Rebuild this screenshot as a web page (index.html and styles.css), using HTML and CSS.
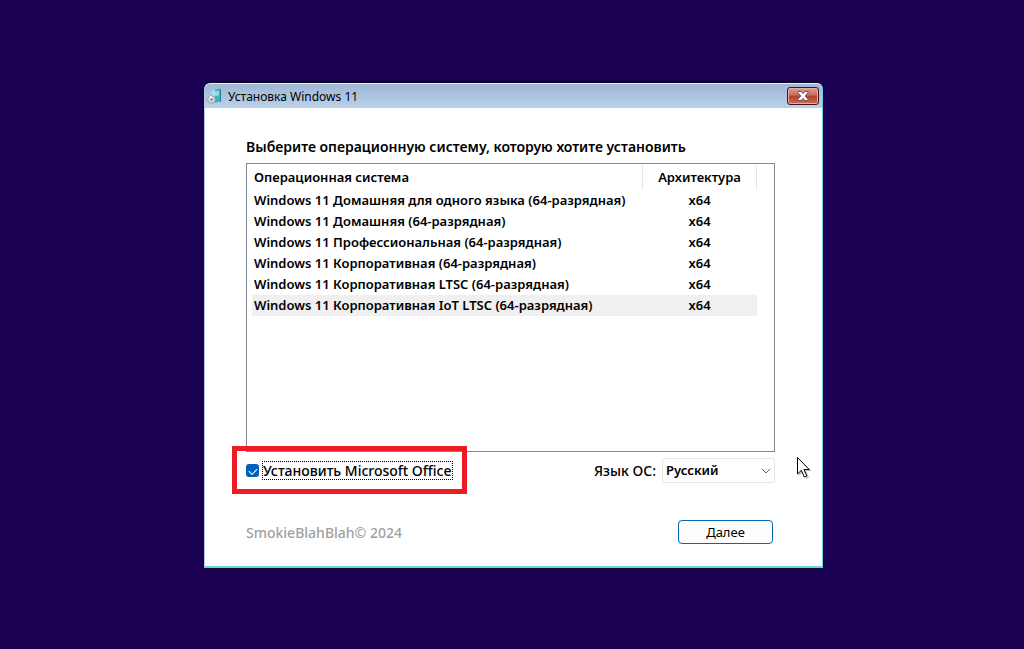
FILE: index.html
```html
<!DOCTYPE html>
<html lang="ru">
<head>
    <meta charset="UTF-8">
    <meta name="viewport" content="width=device-width, initial-scale=1.0">
    <title>Установка Windows 11</title>
    <link rel="stylesheet" href="styles.css">
</head>
<body>
    <main class="window">
        <header class="title-bar">
            <svg class="app-icon" width="16" height="16" viewBox="0 0 16 16">
                <path d="M4 2.500 13 .5v13L5 15.500z" fill="#38b3c4"/>
                <path d="M4 2.500 8 1.600v12.900L5 15.500z" fill="#a5e3ea"/>
                <path d="M8 3.500 12 2.500v5L8 8z" fill="#8be0e6"/>
                <path d="M13 .5 14 1.500v12l-1 .5z" fill="#1d8496"/>
                <circle cx="4.500" cy="11.500" r="3.800" fill="#d5dce0" stroke="#8796a0" stroke-width=".8"/>
                <path d="M4.500 11.500 2 9.500a4 4 0 0 1 2.500-2z" fill="#fff"/>
                <circle cx="4.500" cy="11.500" r="1.200" fill="#71818e"/>
            </svg>
            <h1 class="title">Установка Windows 11</h1>
            <button class="close-btn" type="button" aria-label="Закрыть">
                <svg width="12" height="10" viewBox="0 0 12 10">
                    <path d="M1 .5h3.200L6 2.600 7.800.5H11v1.300L8.200 5 11 8.200v1.300H7.800L6 7.400 4.200 9.500H1V8.200L3.800 5 1 1.800z" fill="#fff" stroke="#54535f" stroke-width=".9"/>
                </svg>
            </button>
        </header>

        <form class="content">
            <h2 class="heading">Выберите операционную систему, которую хотите установить</h2>

            <div class="os-list">
                <table class="os-table">
                    <thead>
                        <tr><th>Операционная система</th><th class="arch">Архитектура</th></tr>
                    </thead>
                    <tbody>
                        <tr><td>Windows 11 Домашняя для одного языка (64-разрядная)</td><td class="arch">x64</td></tr>
                        <tr><td>Windows 11 Домашняя (64-разрядная)</td><td class="arch">x64</td></tr>
                        <tr><td>Windows 11 Профессиональная (64-разрядная)</td><td class="arch">x64</td></tr>
                        <tr><td>Windows 11 Корпоративная (64-разрядная)</td><td class="arch">x64</td></tr>
                        <tr><td>Windows 11 Корпоративная LTSC (64-разрядная)</td><td class="arch">x64</td></tr>
                        <tr class="selected"><td>Windows 11 Корпоративная IoT LTSC (64-разрядная)</td><td class="arch">x64</td></tr>
                    </tbody>
                </table>
            </div>

            <div class="options">
                <div class="office">
                    <input class="checkbox" type="checkbox" id="office" checked>
                    <label class="office-label" for="office">Установить Microsoft Office</label>
                </div>
                <div class="language">
                    <label for="language">Язык ОС:</label>
                    <div class="select-box">
                        <select class="select" id="language">
                            <option>Русский</option>
                        </select>
                        <svg class="chevron" width="10" height="6" viewBox="0 0 10 6">
                            <path d="M.8.8 5 5 9.200.8" fill="none" stroke="#666" stroke-width="1"/>
                        </svg>
                    </div>
                </div>
            </div>

            <footer class="footer">
                <span class="copyright">SmokieBlahBlah© 2024</span>
                <button class="next-btn" type="button">Далее</button>
            </footer>
        </form>

        <svg class="cursor" width="18" height="26" viewBox="0 0 18 26">
            <path d="M3 3v17l4-4 3 7 3-1.500-3-6.500h5.500z" fill="#000" opacity=".25"/>
            <path d="M1.500 1.500v16.500l3.800-3.700 3 6.700 2.500-1.200-2.900-6.300h5.300z" fill="#fff" stroke="#000"/>
        </svg>
    </main>
</body>
</html>
```

FILE: styles.css
```css
* {
    margin: 0;
    padding: 0;
    box-sizing: border-box;
}

body {
    display: flex;
    align-items: center;
    justify-content: center;
    min-height: 100vh;
    padding: 2px 0 0 3px;
    background: #190053;
    color: #000;
    font-family: 'Noto Sans', 'Open Sans', sans-serif;
    font-size: 14px;
    font-weight: 500;
    line-height: 21px;
}

button,
input,
select {
    font: inherit;
    color: inherit;
}

.window {
    position: relative;
    width: 100%;
    max-width: 619px;
    background: #fff;
    border: 1px solid #6fd0e0;
    border-left-color: #b5c8dc;
    border-top-color: #e6eef6;
    border-bottom-width: 2px;
    border-radius: 6px 6px 0 0;
    box-shadow: 0 0 0 1px #0b0a20;
}

.title-bar {
    display: flex;
    align-items: center;
    gap: 5px;
    height: 24px;
    padding: 0 3px 0 2px;
    background: linear-gradient(#9fb7d4, #b9d1ea);
    border-radius: 5px 5px 0 0;
}

.title {
    flex: 1;
    font-size: 12px;
    font-weight: 400;
}

.close-btn {
    display: flex;
    align-items: center;
    justify-content: center;
    width: 32px;
    height: 18px;
    background: linear-gradient(#dc9c8f, #cb6b58 45%, #b5402c 50%, #cf6a54);
    border: 1px solid #47131b;
    border-radius: 3px;
    box-shadow: inset 0 0 0 1px #e5aea3;
}

.content {
    padding: 28px 47px 22px 41px;
}

.heading {
    margin-bottom: 6px;
    font-size: 14px;
    font-weight: 600;
}

.os-list {
    height: 289px;
    padding: 1px 17px 0 5px;
    border: 1px solid #828790;
}

.os-table {
    width: 100%;
    border-collapse: collapse;
    font-size: 13px;
    font-weight: 600;
}

.os-table th {
    height: 25px;
    padding: 0 2px;
    border-right: 1px solid #e5e5e5;
    font-weight: 600;
    text-align: left;
}

.os-table td {
    height: 21px;
    padding: 0 2px;
    white-space: nowrap;
}

.os-table .arch {
    width: 114px;
    text-align: center;
}

.selected {
    background: #f0f0f0;
}

.options {
    display: flex;
    justify-content: space-between;
    align-items: center;
    margin-top: 6px;
}

.office {
    position: relative;
    display: flex;
    align-items: center;
    gap: 3px;
}

/* red frame around the Office option */
.office::after {
    content: '';
    position: absolute;
    inset: -15px -14px -14px -14px;
    border: 5px solid #ed1c24;
    pointer-events: none;
}

.checkbox {
    appearance: none;
    width: 13px;
    height: 13px;
    background: #005fb8;
    border-radius: 3px;
}

.checkbox:checked::after {
    content: '';
    display: block;
    width: 7px;
    height: 4px;
    margin: 4px 3px;
    border: solid #fff;
    border-width: 0 0 1px 1px;
    transform: rotate(-45deg);
}

.office-label {
    border: 1px dotted #000;
    line-height: 17px;
}

.language {
    display: flex;
    align-items: center;
    gap: 6px;
}

.select-box {
    position: relative;
}

.select {
    appearance: none;
    display: block;
    width: 113px;
    height: 25px;
    padding: 0 3px;
    background: #fff;
    border: 1px solid #e5e5e5;
    border-radius: 2px;
    font-size: 13px;
    font-weight: 600;
}

.chevron {
    position: absolute;
    top: 10px;
    right: 4px;
    pointer-events: none;
}

.footer {
    display: flex;
    justify-content: space-between;
    align-items: center;
    margin-top: 37px;
    padding-right: 2px;
}

.copyright {
    color: #a0a0a0;
}

.next-btn {
    width: 95px;
    height: 24px;
    background: #fdfdfd;
    border: 1px solid #0067b0;
    border-radius: 4px;
    font-size: 13px;
    font-weight: 400;
}

.cursor {
    position: absolute;
    left: 591px;
    top: 372px;
    pointer-events: none;
}
```
